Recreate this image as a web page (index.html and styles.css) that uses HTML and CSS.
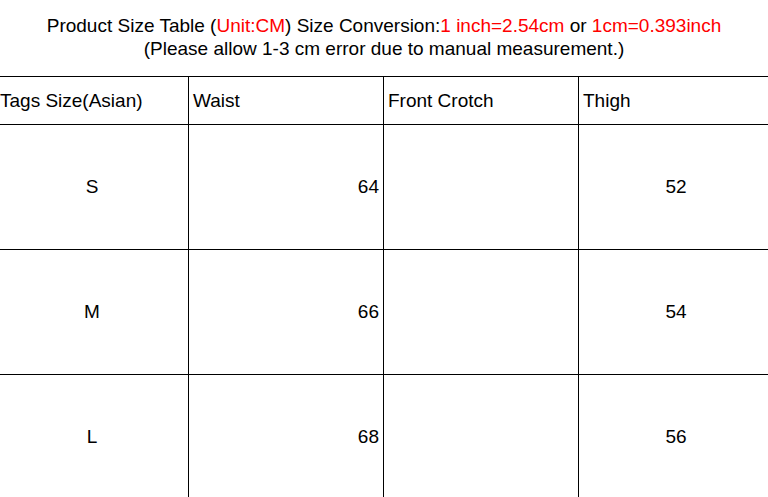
FILE: index.html
```html
<!DOCTYPE html>
<html>
<head>
<meta charset="utf-8">
<link rel="stylesheet" href="styles.css">
</head>
<body>
<div class="title">
  <div class="line">Product Size Table (<span class="red">Unit:CM</span>) Size Conversion:<span class="red">1 inch=2.54cm</span> or <span class="red">1cm=0.393inch</span></div>
  <div class="line">(Please allow 1-3 cm error due to manual measurement.)</div>
</div>
<div class="grid">
  <div class="cell head">Tags Size(Asian)</div>
  <div class="cell head">Waist</div>
  <div class="cell head">Front Crotch</div>
  <div class="cell head last">Thigh</div>

  <div class="cell center">S</div>
  <div class="cell right">64</div>
  <div class="cell"></div>
  <div class="cell center last">52</div>

  <div class="cell center">M</div>
  <div class="cell right">66</div>
  <div class="cell"></div>
  <div class="cell center last">54</div>

  <div class="cell center">L</div>
  <div class="cell right">68</div>
  <div class="cell"></div>
  <div class="cell center last">56</div>
</div>
</body>
</html>
```
FILE: styles.css
```css
html, body {
  margin: 0;
  padding: 0;
  background: #fff;
  overflow: hidden;
}
body {
  font-family: "Liberation Sans", Arial, sans-serif;
  color: #000;
  width: 768px;
  height: 497px;
}
.title {
  height: 76px;
  box-sizing: border-box;
  padding-top: 14px;
  text-align: center;
  font-size: 19px;
  line-height: 23px;
}
.red {
  color: #ff0000;
}
.grid {
  display: grid;
  grid-template-columns: 193px 195px 195px 196px;
  grid-template-rows: 48px 125px 125px 125px;
  margin-left: -5px;
  font-size: 19px;
}
.cell {
  border-left: 1px solid #000;
  border-top: 1px solid #000;
  display: flex;
  align-items: center;
  padding: 0 4px;
  box-sizing: border-box;
  white-space: nowrap;
}
.last {
  border-right: 1px solid #000;
}
.head {
  justify-content: flex-start;
}
.center {
  justify-content: center;
}
.right {
  justify-content: flex-end;
}
```
